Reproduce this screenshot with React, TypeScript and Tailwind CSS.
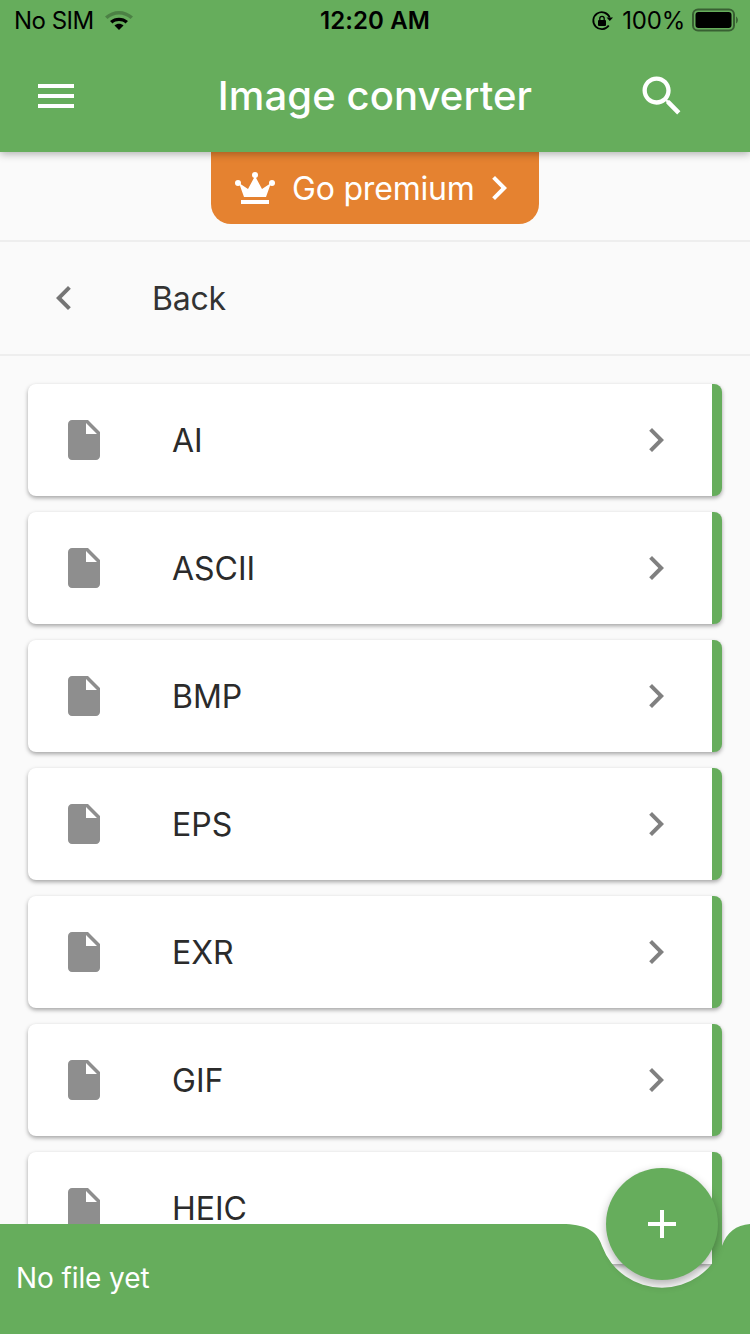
import React from 'react';

const FORMATS = ['AI', 'ASCII', 'BMP', 'EPS', 'EXR', 'GIF', 'HEIC'];

function MaterialIcon({ d, className }: { d: string; className: string }) {
  return (
    <svg viewBox="0 0 24 24" fill="currentColor" className={className}>
      <path d={d} />
    </svg>
  );
}

const chevronRight = 'M10 6L8.59 7.41 13.17 12l-4.58 4.59L10 18l6-6z';
const chevronLeft = 'M15.41 7.41L14 6l-6 6 6 6 1.41-1.41L10.83 12z';
const fileIcon = 'M6 2c-1.1 0-1.99.9-1.99 2L4 20c0 1.1.89 2 1.99 2H18c1.1 0 2-.9 2-2V8l-6-6H6zm7 7V3.5L18.5 9H13z';
const menuIcon = 'M3 18h18v-2H3v2zm0-5h18v-2H3v2zm0-7v2h18V6H3z';
const searchIcon = 'M15.5 14h-.79l-.28-.27C15.41 12.59 16 11.11 16 9.5 16 5.91 13.09 3 9.5 3S3 5.91 3 9.5 5.91 16 9.5 16c1.61 0 3.09-.59 4.23-1.57l.27.28v.79l5 4.99L20.49 19l-4.99-5zm-6 0C7.01 14 5 11.99 5 9.5S7.01 5 9.5 5 14 7.01 14 9.5 11.99 14 9.5 14z';

function StatusBar() {
  return (
    <div className="h-10 pt-[2px] pl-[14px] pr-[12px] flex items-center justify-between text-black text-[24px] leading-none">
      <div className="flex-1 flex items-center gap-[10px]">
        <span className="tracking-[-0.5px]">No SIM</span>
        <svg width="30" height="22" viewBox="0 0 30 22" className="-mt-[4px]">
          <path d="M1 8.5C9 1 21 1 29 8.5L26.5 11C20 5 10 5 3.500 11z" fill="#000" fillOpacity="0.25" />
          <path d="M6 13C11 8.500 19 8.500 24 13L21.500 15.500C18 12.300 12 12.300 8.500 15.500z" fill="#000" />
          <path d="M10.500 17.500C13 15.300 17 15.300 19.500 17.500L15 22z" fill="#000" />
        </svg>
      </div>
      <span className="font-semibold tracking-[0.1px] -ml-[2px]">12:20 AM</span>
      <div className="flex-1 flex items-center justify-end">
        <svg width="22" height="22" viewBox="0 0 22 22" fill="none" className="mr-[9px]">
          <path d="M17.800 15.500A8.500 8.500 0 1 1 18.700 7.500" stroke="#000" strokeWidth="1.800" />
          <path d="M15.500 7.500h6.500l-3.200 3.500z" fill="#000" />
          <rect x="7" y="10" width="8" height="6" rx="1" fill="#000" />
          <path d="M8.800 10V8.500a2.200 2.200 0 0 1 4.400 0V10" stroke="#000" strokeWidth="1.300" />
        </svg>
        <span className="tracking-[-0.2px] mr-[7px]">100%</span>
        <svg width="46" height="24" viewBox="0 0 46 24" fill="none" className="-mt-[2px]">
          <rect x="1" y="1.500" width="41" height="21" rx="5" stroke="#000" strokeOpacity="0.45" strokeWidth="2" />
          <rect x="3.500" y="4" width="36" height="16" rx="3" fill="#000" />
          <path d="M44 8.500c1 .5 2 2 2 3.500s-1 3-2 3.500z" fill="#000" fillOpacity="0.4" />
        </svg>
      </div>
    </div>
  );
}

function FormatRow({ name }: { name: string }) {
  return (
    <div className="h-[112px] flex items-center bg-white rounded-[8px] overflow-hidden border-r-[10px] border-[#66ad5c] shadow-[0_2px_4px_rgba(0,0,0,0.35)] pl-8 pr-8">
      <MaterialIcon d={fileIcon} className="w-12 h-12 text-[#8e8e8e] shrink-0" />
      <span className="ml-16 mt-[2px] flex-1 text-[32px] leading-none text-[#2b2b2b]">{name}</span>
      <MaterialIcon d={chevronRight} className="w-12 h-12 text-[#808080] shrink-0" />
    </div>
  );
}

export default function App() {
  return (
    <div className="relative w-[750px] h-[1334px] overflow-hidden bg-[#fafafa] font-['Inter',sans-serif]">
      <header className="relative z-10 h-[152px] bg-[#66ad5c] shadow-[0_2px_8px_rgba(0,0,0,0.3)]">
        <StatusBar />
        <div className="h-[112px] flex items-center">
          <div className="w-[200px] shrink-0 pl-8">
            <MaterialIcon d={menuIcon} className="w-12 h-12 text-white" />
          </div>
          <h1 className="flex-1 text-center whitespace-nowrap text-[40px] leading-none font-medium text-white tracking-[0.1px]">Image converter</h1>
          <div className="w-[200px] shrink-0 flex justify-end pr-[62px]">
            <MaterialIcon d={searchIcon} className="w-[52px] h-[52px] text-white" />
          </div>
        </div>
      </header>

      <div className="flex justify-center h-[90px] border-b-2 border-[#eeeeee]">
        <div className="w-[328px] h-[72px] bg-[#e58230] rounded-b-[20px] flex items-center pl-6 text-white">
          <svg width="40" height="32" viewBox="0 0 40 32" fill="currentColor" className="shrink-0">
            <circle cx="3" cy="11" r="3" />
            <circle cx="20" cy="3" r="3" />
            <circle cx="37" cy="11" r="3" />
            <path d="M4 11l9 6 7-13 7 13 9-6-5 14H9z" />
            <rect x="6" y="28" width="28" height="4" />
          </svg>
          <span className="ml-[17px] mt-[2px] text-[32px] leading-none tracking-[-0.2px]">Go premium</span>
          <MaterialIcon d={chevronRight} className="w-12 h-12" />
        </div>
      </div>

      <div className="h-[114px] flex items-center pl-10 border-b-2 border-[#eeeeee]">
        <MaterialIcon d={chevronLeft} className="w-12 h-12 text-[#757575]" />
        <span className="ml-16 mt-[2px] text-[32px] leading-none text-[#333333] tracking-[-0.2px]">Back</span>
      </div>

      <div className="flex flex-col gap-4 pt-7 px-7">
        {FORMATS.map(name => <FormatRow key={name} name={name} />)}
      </div>

      {/* bottom bar with notch for the add button */}
      <div className="absolute left-0 right-0 bottom-0 h-[110px] z-10 flex items-center pl-4 text-white text-[28px]">
        <svg viewBox="0 0 750 110" className="absolute inset-0 w-[750px] h-[110px]" fill="#66ad5c">
          <path d="M0 0H562C584 0 597 6 602 22A64 64 0 0 0 722 22C727 8 736 1 750 0V110H0z" />
        </svg>
        <span className="relative -mt-[2px] leading-none tracking-[-0.1px]">No file yet</span>
      </div>
      <button className="absolute z-20 left-[606px] top-[1168px] w-28 h-28 rounded-full bg-[#66ad5c] text-white flex items-center justify-center shadow-[0_4px_10px_rgba(0,0,0,0.3)]">
        <svg width="28" height="28" viewBox="0 0 28 28" fill="currentColor">
          <rect x="12" y="0" width="4" height="28" />
          <rect x="0" y="12" width="28" height="4" />
        </svg>
      </button>
    </div>
  );
}
